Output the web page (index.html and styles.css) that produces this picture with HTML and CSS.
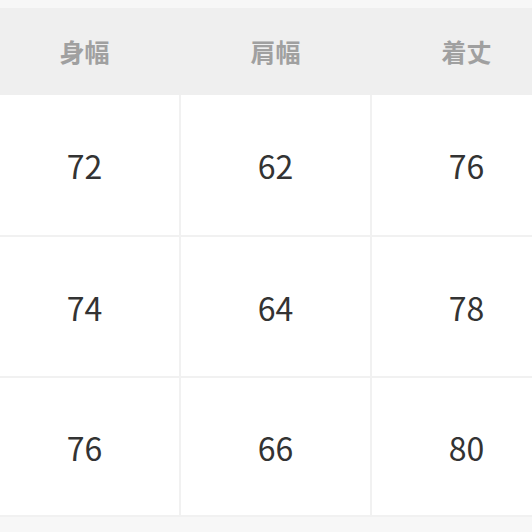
FILE: index.html
```html
<!DOCTYPE html>
<html lang="ja">
<head>
<meta charset="utf-8">
<link rel="stylesheet" href="styles.css">
</head>
<body>
<div class="page">
  <div class="table">
    <div class="head">
      <div class="th">身幅</div>
      <div class="th">肩幅</div>
      <div class="th">着丈</div>
    </div>
    <div class="rows">
      <div class="td r1">72</div><div class="td r1">62</div><div class="td r1">76</div>
      <div class="td r2">74</div><div class="td r2">64</div><div class="td r2">78</div>
      <div class="td r3">76</div><div class="td r3">66</div><div class="td r3">80</div>
    </div>
  </div>
</div>
</body>
</html>
```
FILE: styles.css
```css
html, body {
  margin: 0;
  padding: 0;
  width: 532px;
  height: 532px;
  overflow: hidden;
  background: #efefef;
}
.page {
  width: 532px;
  height: 532px;
  overflow: hidden;
  background: #f7f7f7;
  padding-top: 8px;
  box-sizing: border-box;
}
.table {
  margin-left: -10px;
  width: 571px;
  background: #efefef;
  font-family: "Noto Sans CJK JP", "Noto Sans", sans-serif;
}
.head {
  display: grid;
  grid-template-columns: 189px 189px 189px;
  column-gap: 2px;
  height: 87px;
  background: #efefef;
}
.th {
  display: flex;
  align-items: center;
  justify-content: center;
  font-size: 25px;
  font-weight: 700;
  color: #a0a0a0;
  padding-bottom: 2px;
}
.rows {
  display: grid;
  grid-template-columns: 189px 189px 189px;
  gap: 2px;
  background: #f1f1f1;
  padding-bottom: 2px;
}
.td {
  background: #fff;
  display: flex;
  align-items: center;
  justify-content: center;
  font-size: 32px;
  font-weight: 400;
  color: #333;
}
.r1 { height: 140px; }
.r2 { height: 139px; }
.r3 { height: 137px; }
```
